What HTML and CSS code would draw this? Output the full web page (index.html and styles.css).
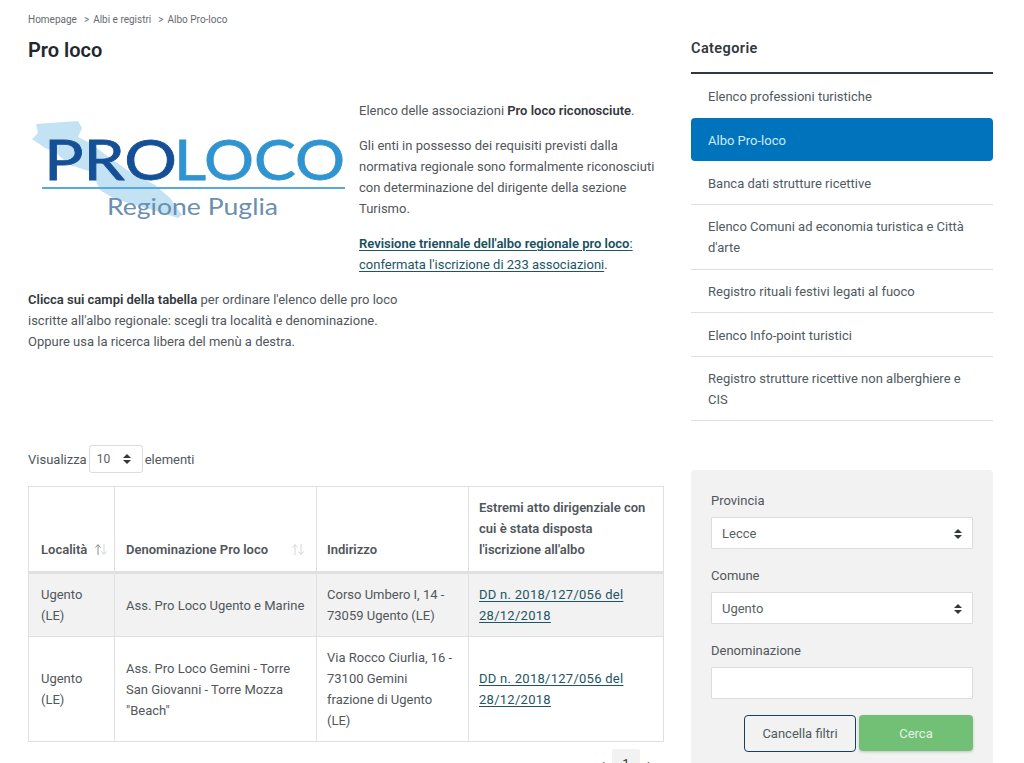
FILE: index.html
```html
<!DOCTYPE html>
<html lang="it">
<head>
<meta charset="utf-8">
<title>Pro loco</title>
<link rel="stylesheet" href="styles.css">
</head>
<body>
<div class="page">
  <main class="main">
    <nav class="crumbs"><span>Homepage</span><i>&gt;</i><span>Albi e registri</span><i>&gt;</i><span>Albo Pro-loco</span></nav>
    <h1>Pro loco</h1>
    <div class="intro">
      <svg class="logo" width="320" height="112" viewBox="0 0 320 112">
        <path fill="#c3e2f4" d="M8 14 L50 11 L54 18 L50 27 L62 33 L82 48 L102 62 L127 75 L142 88 L154 105 L150 108 L132 102 L107 95 L85 88 L72 80 L64 62 L42 55 L27 42 L17 38 L4 29 L10 23 Z"/>
        <text x="16" y="70" class="logo-a" textLength="133" lengthAdjust="spacingAndGlyphs">PRO</text>
        <text x="146" y="70" class="logo-b" textLength="171" lengthAdjust="spacingAndGlyphs">LOCO</text>
        <rect x="14" y="77" width="303" height="2" fill="#5aa9dc"/>
        <text x="79" y="105" class="logo-c" textLength="171" lengthAdjust="spacingAndGlyphs">Regione Puglia</text>
      </svg>
      <div class="intro-text">
        <p>Elenco delle associazioni <b>Pro loco riconosciute</b>.</p>
        <p>Gli enti in possesso dei requisiti previsti dalla<br>normativa regionale sono formalmente riconosciuti<br>con determinazione del dirigente della sezione<br>Turismo.</p>
        <p class="last"><a href="#"><b>Revisione triennale dell'albo regionale pro loco</b>:<br>confermata l'iscrizione di 233 associazioni</a>.</p>
      </div>
    </div>
    <p class="hint"><b>Clicca sui campi della tabella</b> per ordinare l'elenco delle pro loco<br>iscritte all'albo regionale: scegli tra località e denominazione.<br>Oppure usa la ricerca libera del menù a destra.</p>
    <div class="length">
      <span>Visualizza</span>
      <span class="select-wrap small">
        <select><option>10</option></select>
        <svg class="updown" width="8" height="10" viewBox="0 0 8 10"><path d="M4 0 L8 4 H0 Z M0 6 H8 L4 10 Z"/></svg>
      </span>
      <span>elementi</span>
    </div>
    <table>
      <colgroup><col class="c1"><col class="c2"><col class="c3"><col class="c4"></colgroup>
      <thead>
        <tr>
          <th><div class="sort">Località
            <svg width="14" height="13" viewBox="0 0 14 13"><path class="dark" d="M4 12 V2 M1.5 4.5 L4 1.5 L6.5 4.5"/><path class="pale" d="M10 1 V11 M7.5 8.5 L10 11.5 L12.5 8.5"/></svg></div></th>
          <th><div class="sort">Denominazione Pro loco
            <svg width="14" height="13" viewBox="0 0 14 13"><path class="pale" d="M4 12 V2 M1.5 4.5 L4 1.5 L6.5 4.5"/><path class="pale" d="M10 1 V11 M7.5 8.5 L10 11.5 L12.5 8.5"/></svg></div></th>
          <th>Indirizzo</th>
          <th>Estremi atto dirigenziale con cui è stata disposta l'iscrizione all'albo</th>
        </tr>
      </thead>
      <tbody>
        <tr class="odd">
          <td>Ugento (LE)</td>
          <td>Ass. Pro Loco Ugento e Marine</td>
          <td>Corso Umbero I, 14 - 73059 Ugento (LE)</td>
          <td><a href="#">DD n. 2018/127/056 del 28/12/2018</a></td>
        </tr>
        <tr>
          <td>Ugento (LE)</td>
          <td>Ass. Pro Loco Gemini - Torre San Giovanni - Torre Mozza "Beach"</td>
          <td>Via Rocco Ciurlia, 16 - 73100 Gemini frazione di Ugento (LE)</td>
          <td><a href="#">DD n. 2018/127/056 del 28/12/2018</a></td>
        </tr>
      </tbody>
    </table>
    <div class="pager"><span>‹</span><span class="current">1</span><span>›</span></div>
  </main>
  <aside class="side">
    <h2>Categorie</h2>
    <ul class="cats">
      <li class="plain">Elenco professioni turistiche</li>
      <li class="active">Albo Pro-loco</li>
      <li>Banca dati strutture ricettive</li>
      <li>Elenco Comuni ad economia turistica e Città d'arte</li>
      <li>Registro rituali festivi legati al fuoco</li>
      <li>Elenco Info-point turistici</li>
      <li>Registro strutture ricettive non alberghiere e CIS</li>
    </ul>
    <form class="filters">
      <label>Provincia</label>
      <span class="select-wrap">
        <select><option>Lecce</option></select>
        <svg class="updown" width="8" height="10" viewBox="0 0 8 10"><path d="M4 0 L8 4 H0 Z M0 6 H8 L4 10 Z"/></svg>
      </span>
      <label>Comune</label>
      <span class="select-wrap">
        <select><option>Ugento</option></select>
        <svg class="updown" width="8" height="10" viewBox="0 0 8 10"><path d="M4 0 L8 4 H0 Z M0 6 H8 L4 10 Z"/></svg>
      </span>
      <label>Denominazione</label>
      <input type="text">
      <div class="actions">
        <button type="button" class="ghost">Cancella filtri</button>
        <button type="button" class="go">Cerca</button>
      </div>
    </form>
  </aside>
</div>
</body>
</html>
```
FILE: styles.css
```css
* { box-sizing: border-box; }
html, body { margin: 0; padding: 0; height: 763px; overflow: hidden; background: #fff; }
body { font-family: "Roboto", "Liberation Sans", sans-serif; font-size: 13px; line-height: 21px; color: #51565b; }
.page { display: flex; gap: 27px; padding: 0 30px 0 28px; }
.main { width: 636px; flex: none; }
.side { width: 302px; flex: none; }

.crumbs { margin-top: 14px; height: 12px; display: flex; align-items: center; font-size: 10px; line-height: 12px; color: #666b70; }
.crumbs i { font-style: normal; margin: 0 4px 0 7px; font-size: 10px; }
h1 { margin: 10px 0 0; font-size: 20px; line-height: 28px; font-weight: 600; color: #23272b; }

.intro { display: flex; margin-top: 36px; }
.logo { flex: none; width: 320px; margin: 10px 11px 0 0; }
.logo-a, .logo-b { font-family: "Lato", sans-serif; font-size: 56px; font-weight: 400; stroke-width: .8px; }
.logo-a { fill: #154f96; stroke: #154f96; }
.logo-b { fill: #2f94d0; stroke: #2f94d0; }
.logo-c { font-family: "Lato", sans-serif; font-size: 24px; font-weight: 400; fill: #6b8fae; }
.intro-text { width: 305px; }
p { margin: 0 0 14px; }
p.last { margin: 0; }
b { font-weight: 600; color: #33383c; }
a { color: #1e5563; text-decoration: underline; text-underline-offset: 2px; }
a b { color: #17505f; }
td a { letter-spacing: .27px; }
.hint { margin-top: 14px; }

.length { margin-top: 93px; height: 28px; display: flex; align-items: center; gap: 2px; }
.select-wrap { position: relative; display: block; }
.select-wrap select { appearance: none; display: block; width: 100%; height: 32px; padding: 2px 10px 0; border: 1px solid #dcdcdc; background: #fff; font: inherit; color: #5a5f64; border-radius: 1px; }
.select-wrap.small { width: 54px; }
.select-wrap.small select { height: 28px; padding: 0 7px; border-radius: 3px; font-size: 12px; }
.updown { position: absolute; right: 11px; top: 12px; fill: #33383c; }
.small .updown { right: 12px; top: 9px; }

table { margin-top: 13px; width: 635px; table-layout: fixed; border-collapse: collapse; }
.c1 { width: 86px; } .c2 { width: 202px; } .c3 { width: 152px; } .c4 { width: 195px; }
th, td { border: 1px solid #e0e0e0; padding: 10px; text-align: left; }
th { vertical-align: bottom; font-weight: 600; color: #51565b; border-bottom: 3px solid #e0e0e0; padding-bottom: 11px; }
th:nth-child(2), td:nth-child(2) { padding-left: 11px; padding-right: 11px; }
th:nth-child(3), td:nth-child(3) { padding-right: 14px; }
th:first-child, td:first-child { padding-left: 12px; padding-right: 6px; }
td { vertical-align: middle; }
.odd td { background: #f2f2f2; }
.sort { display: flex; align-items: center; justify-content: space-between; }
.sort svg { flex: none; fill: none; stroke-width: 1; }
.dark { stroke: #8a9095; }
.pale { stroke: #d4d6d8; }

.pager { display: flex; justify-content: flex-end; align-items: flex-start; margin-top: 7px; padding-right: 6px; }
.pager span { width: 18px; height: 32px; text-align: center; padding-top: 4px; color: #33383c; }
.pager .current { width: 28px; background: #f2f2f2; border-radius: 2px; }

h2 { margin: 39px 0 0; height: 35px; font-size: 14.5px; line-height: 20px; font-weight: 600; letter-spacing: .4px; color: #33383c; border-bottom: 2px solid #33383c; }
.cats { list-style: none; margin: 0; padding: 0; }
.cats li { padding: 11.5px 17px 10.1px; border-bottom: 1px solid #e0e0e0; color: #4f5a61; }
.cats li.plain { border-bottom: 0; padding: 11.5px 17px; }
.cats li.active { background: #0073bd; color: #cfe9f8; border-radius: 4px; border-bottom: 0; padding: 12px 17px 10.4px; }
.filters { margin-top: 48.5px; background: #f2f2f2; border-radius: 4px; padding: 20px; height: 320px; display: flex; flex-direction: column; }
.filters label { display: block; margin-bottom: 6px; }
.filters .select-wrap, .filters input { margin-bottom: 16px; }
.filters input { display: block; width: 100%; height: 32px; border: 1px solid #dcdcdc; background: #fff; border-radius: 1px; }
.actions { display: flex; justify-content: flex-end; gap: 3px; align-items: center; }
.actions button { font: inherit; height: 36px; border-radius: 4px; }
.ghost { width: 112px; height: 37px !important; background: transparent; border: 1px solid #17405c; color: #4f5a61; }
.go { width: 114px; background: #72c076; border: 0; color: #e4f4e4; box-shadow: 0 1px 3px rgba(0,0,0,.2); }
```
